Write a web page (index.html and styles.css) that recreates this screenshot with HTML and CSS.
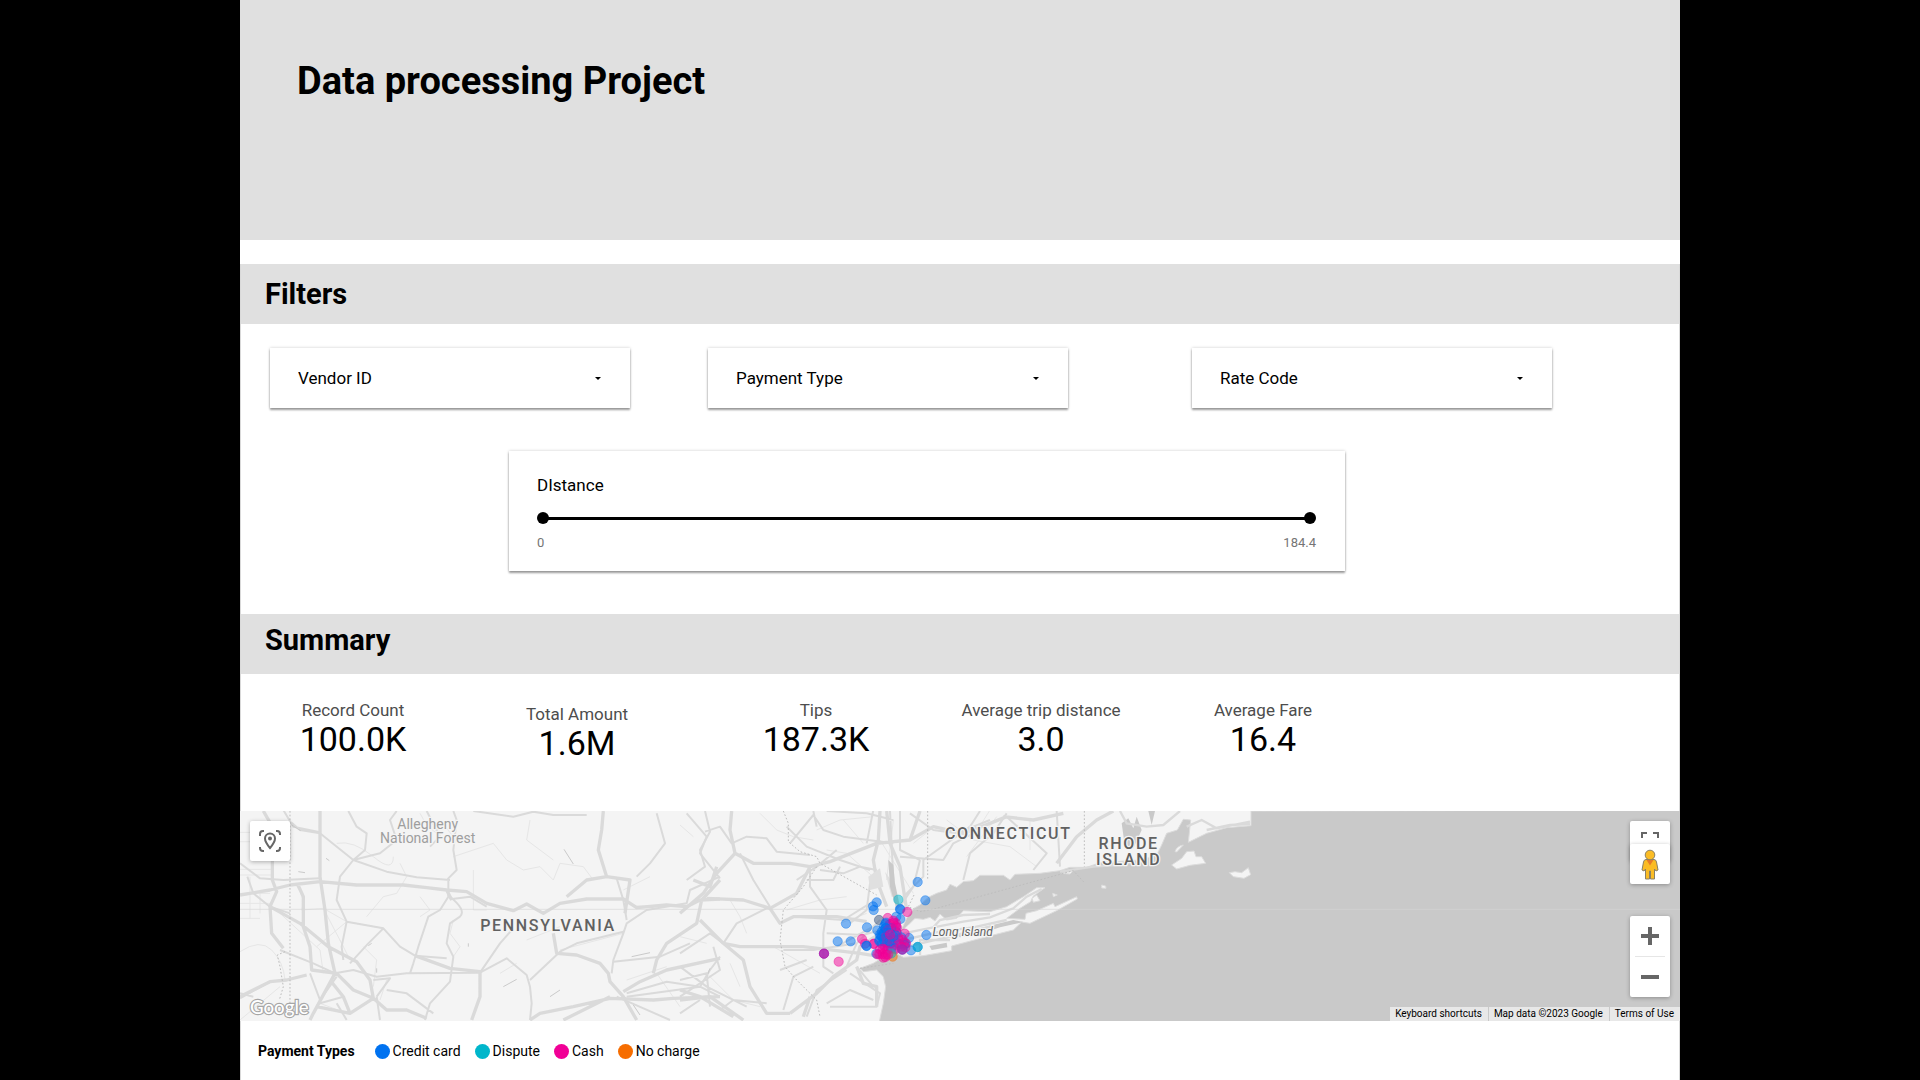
FILE: index.html
```html
<!DOCTYPE html>
<html lang="en">
<head>
<meta charset="utf-8">
<title>Data processing Project</title>
<link rel="stylesheet" href="styles.css">
</head>
<body>
<main class="report">
  <header class="banner"><h1>Data processing Project</h1></header>

  <section class="panel">
    <h2 class="bar">Filters</h2>
    <div class="filters">
      <div class="card filter">
        <select aria-label="Vendor ID"><option>Vendor ID</option></select>
        <svg class="caret" viewBox="0 0 6 3"><path d="M0 0h6L3 3z"/></svg>
      </div>
      <div class="card filter">
        <select aria-label="Payment Type"><option>Payment Type</option></select>
        <svg class="caret" viewBox="0 0 6 3"><path d="M0 0h6L3 3z"/></svg>
      </div>
      <div class="card filter">
        <select aria-label="Rate Code"><option>Rate Code</option></select>
        <svg class="caret" viewBox="0 0 6 3"><path d="M0 0h6L3 3z"/></svg>
      </div>
    </div>
    <div class="distance-row">
      <div class="card distance">
        <label for="distance-min">DIstance</label>
        <div class="range">
          <input id="distance-min" type="range" min="0" max="184.4" step="0.1" value="0">
          <input type="range" min="0" max="184.4" step="0.1" value="184.4" aria-label="Maximum distance">
        </div>
        <div class="range-values"><span>0</span><span>184.4</span></div>
      </div>
    </div>
  </section>

  <section class="panel">
    <h2 class="bar bar-top">Summary</h2>
    <dl class="scores">
      <div class="score"><dt>Record Count</dt><dd>100.0K</dd></div>
      <div class="score score-low"><dt>Total Amount</dt><dd>1.6M</dd></div>
      <div class="score"><dt>Tips</dt><dd>187.3K</dd></div>
      <div class="score"><dt>Average trip distance</dt><dd>3.0</dd></div>
      <div class="score"><dt>Average Fare</dt><dd>16.4</dd></div>
    </dl>
  </section>

  <section class="map" aria-label="Trips by payment type">
    <svg class="map-canvas" viewBox="0 0 4320 630" preserveAspectRatio="xMidYMid slice">
      <!-- western roads -->
      <g transform="translate(0 -33)">
        <g class="minor">
          <path d="M0 97H40M0 125H45M0 208H100M0 225H95M0 280H90M0 310H90M0 355H60M30 230V355M60 270V340M0 455Q60 415 95 450T135 540M185 330L250 325L320 365L430 385M250 325L310 440M165 250Q200 300 185 330M290 130Q340 120 400 170T460 170M540 40Q560 80 590 100L600 60L640 110M480 190L500 230L470 280L430 290L380 350M540 290L570 330L540 350M640 360L630 400L660 440L640 470M640 170L700 150L760 130L800 180L850 210L900 200L940 240L960 190L1030 200L1060 240M940 180L860 120L870 60M1230 230L1150 270M780 520L830 490M860 420L960 380M1150 400L960 450M120 340L240 450L250 520M330 480L300 420M320 365L230 440M370 440L410 480L400 560M0 660L120 560M240 610L320 640M440 540L420 600M1160 540L1280 500M1320 620L1250 520M700 210V330L740 330"/>
        </g>
        <g class="mid">
          <path d="M0 190L60 235L130 240L240 235M22 230L40 280L90 320L150 340M155 68L180 90L240 100L340 180L440 215L530 232L630 240M130 30L160 80L240 97M325 33L350 80L380 100L375 150L340 180L300 230L290 300L320 365L305 440L310 480M340 180L420 160L470 120L450 60L470 33M560 33L600 110L570 140M640 33L650 60L640 150L650 210L625 235V290L600 330L565 350L535 440L520 490L510 520M320 365L430 385L480 440L525 467L620 475M430 385L385 430L330 490M630 290Q680 330 660 350L630 370L620 430L640 470L630 545L570 610L555 660M630 298L690 290L740 320M285 520L340 510L410 530L500 520L720 518M400 540L450 535L410 590M720 518L800 475L860 525L870 560L875 610L870 660M870 540L960 455L1010 430L1150 395M820 385L780 430L720 518M700 33L820 50L880 35L940 45L1040 45M1250 40L1275 130L1230 190L1190 230M1340 40L1400 110L1380 160L1440 235M1130 235L1150 300L1160 360M1150 400L1160 370L1220 330L1340 310L1350 270L1440 230M1190 320L1240 320M1150 400L1120 480L1115 520M1120 485L1260 470L1350 430M1160 580L1280 545L1380 560L1440 590M1130 590L1290 660M1160 590L1380 560L1410 510L1440 470M0 580L40 590M90 545L0 595M120 450L220 490L285 520M210 520L240 600L290 530M240 610L310 590M290 610L320 660M410 590L420 660M440 570L500 580L580 640"/>
        </g>
        <g class="major">
          <path d="M240 33V230L255 330L265 430L285 520L220 640L210 660M0 285L90 270L150 255L240 245L350 255L490 255L560 263L620 270L680 275L740 310L820 332L860 312L910 340L960 310L1040 297L1150 297L1190 323L1280 315L1340 320L1380 300L1440 297M70 33L97 80V240L110 275L90 320L95 400L130 445M90 320L180 370L265 440L350 485L390 540L400 595L330 640L230 620M172 250L190 290V380L210 440L215 510L290 520L340 570L400 595L440 630L500 630L560 655M0 590L90 545L140 540L200 525M620 270L635 300M525 467L630 505L720 515L720 590L695 660M1090 33L1085 90L1075 150L1100 230L1040 240L980 290M1100 230L1170 240L1155 340M940 400L950 460L1010 465L1080 490L1105 520L1110 545L1150 590L1190 660M870 660L900 640L1000 620L1110 595L1240 600L1300 595L1440 590M970 660L1110 590M1150 575L1200 545L1280 510L1440 475M1240 520L1250 480L1280 430L1370 370L1385 300L1440 240M330 640L310 590L270 540"/>
        </g>
        <path class="ticks" d="M972 148L1000 192M175 215L195 218M385 437L395 430M685 430V440M790 560L830 538M1400 530L1410 505M930 590L960 570M155 75L182 92M258 175L268 182M410 505V518M1180 615L1200 645M1175 470L1230 458"/>
        <path class="dashed" d="M150 33V620"/>
        <path class="dashed" d="M135 455L112 465L120 500L130 560L118 600"/>
      </g>

      <!-- eastern roads -->
      <g transform="translate(1320 -33)">
        <g class="minor">
          <path d="M0 75L40 110M240 40L290 90L340 110L400 120M440 150L500 160L590 240M150 300L180 350L200 400M0 410L80 430M80 520L160 600L240 620M150 490L180 560M280 440L350 480L420 520M320 330L420 300L500 290M490 60L550 130M410 90L480 60L580 50M750 90L700 130M800 60L880 120L990 140L1070 200M930 30L880 110M860 170L950 50M1000 70L1100 160M1050 60V150M600 120L700 280M640 60L620 240M560 340L480 370"/>
        </g>
        <g class="mid">
          <path d="M75 33L90 95L60 150L75 200L20 240M75 95L120 80L155 130L200 110L260 115L290 155L390 165M180 160L220 240L270 320M270 320L170 370L130 430M390 200L390 260L440 330L430 400V500L460 520M380 240L460 240L480 200M330 130L400 45L430 90L490 110L640 130M400 33L410 80M320 80L380 140L480 180L570 210M440 33L560 40L640 60M660 33V150L720 180M560 130L580 30M690 40L760 90L830 100L930 60M660 170L790 180L820 130L880 100M850 240L870 160L940 100L980 40M980 50L1100 160L1060 210M1130 33L1140 200M900 33L870 80L730 180V230L670 290M720 180L700 260L660 320M630 33L640 240M600 240L570 250L560 330L510 370M590 210L540 200L490 220L420 210M570 310L490 360L350 350M440 400L550 405L600 390M530 430L400 450L310 450M500 500L530 430L600 360M580 380L470 440M380 650L410 570L500 510M300 510L380 480M310 630L340 530L400 500M0 500L80 560L200 620M0 590L120 510L100 440M510 520L600 580L590 620L450 620M530 500L580 560M440 610L510 570L580 600M0 460L90 400L130 430M0 540L80 520L90 620M0 640L60 600M120 630L160 600L260 610M470 150L410 200L350 240"/>
        </g>
        <g class="major">
          <path d="M155 33L150 90L165 160L110 220L70 280L0 340M165 160L220 190L330 190L390 200L450 185L590 130L690 120L760 80L850 100L930 70L980 50M390 200L350 280L270 325L300 370L340 350L470 350L560 365M130 430L180 440L370 440L540 460L600 470M130 430L60 360M130 430L190 480L210 560L260 640L330 640M600 33L595 120L580 180L590 240L620 320M620 33L630 130L660 200L680 330M720 33L690 120M0 570L60 590L160 650M0 600L90 590L190 660M330 640L410 580L460 530L530 480L540 440L600 400M80 295L190 300L270 325M1130 190L1190 110L1250 60L1300 33M970 50L1060 60L1150 40M390 590L370 650M530 500L550 550L590 560V620M40 240L90 260L110 200"/>
        </g>
        <path class="dashed" d="M310 33L325 70V125L360 155L410 170L420 190L590 285M743 33V240M410 200L370 260L310 330L300 420L315 500L350 540L410 600L420 650M1213 33V200"/>
        <path class="park" d="M565 230L600 205L610 260L570 270ZM615 215L640 250L650 290L635 290Z"/>
      </g>

      <!-- sea, with the coast from New Jersey up to Rhode Island -->
      <g transform="translate(1800 87)">
        <path class="shore" d="M1233 -87V-43L1160 -37L1100 -20L1045 7L1052 -60L1030 -62L1012 -30L980 -20L965 15L950 45L900 60L780 68L740 82L690 82L660 92L600 100L525 103L510 120L490 106L420 106L400 122L370 125L350 142L330 133L320 150L290 160L265 172L240 195L222 205L200 235L170 300L140 345L100 370L60 385L70 395L110 390L130 410L137 440L130 490L118 545H2525V-90Z"/>
        <path class="sea" d="M845 -50L865 -65L880 -35L890 -70L905 -30L880 25L855 20ZM925 -87H945L935 -45ZM145 60L160 75L165 130L180 200L170 210L150 140Z"/>
        <path class="isle" d="M205 255L225 235L250 238L270 232L285 243L300 222L320 240L350 235L370 212L450 215L500 200L550 170L590 143L615 143L580 168L572 185L540 205L500 235L555 238L558 220L590 212L640 190L645 200L710 170L712 177L650 212L570 250L545 246L520 270L460 285L335 318L335 332L250 347L190 352L160 335L165 290Z"/>
        <path class="isle" d="M576 175L590 165L600 182L580 187ZM638 160L652 165L640 170ZM785 135L797 138L798 145L785 144ZM665 100L700 92L690 102Z"/>
        <path class="isle" d="M995 75L1025 55L1040 35L1062 33L1068 50L1085 50L1097 70L1050 76L1010 87ZM1005 35Q1010 18 1030 15L1010 36ZM1168 98L1185 95L1205 98L1225 83L1232 104L1212 115L1180 110Z"/>
        <path class="sea" d="M268 318L320 308L322 322L275 330ZM350 282L430 262L520 240L550 246L480 262L440 275L360 292Z"/>
        <path class="island-road" d="M190 280L280 262L370 245L450 232L520 205L560 170L605 147M190 300L300 275L400 262L500 240M200 320L330 290L460 258M280 262L300 240L370 225L450 222M240 345V300L330 300M660 95L760 80L830 75M1040 -40L1085 -60L1130 -35L1230 -55M1100 -30L1170 -45L1230 -48M840 -87L860 -50L920 -40L970 -45L1020 -87"/>
        <path class="dashed" d="M222 165L205 200L240 215L290 205L700 92L735 130M60 385L160 370"/>
        <path class="seam" d="M-1800 208H2520"/>
      </g>

      <g class="labels">
        <text class="area" x="563" y="54">Allegheny</text>
        <text class="area" x="563" y="96">National Forest</text>
        <text class="state" x="2305" y="84">CONNECTICUT</text>
        <text class="state" x="2666" y="114">RHODE</text>
        <text class="state" x="2666" y="162">ISLAND</text>
        <text class="state" x="924" y="359">PENNSYLVANIA</text>
        <text class="island" x="2168" y="376">Long Island</text>
      </g>

      <g class="trips" transform="translate(1320 -33)">
        <g class="credit"><circle cx="713" cy="246" r="14"/><circle cx="736" cy="301" r="14"/><circle cx="590" cy="307" r="14"/><circle cx="579" cy="319" r="14"/><circle cx="581" cy="330" r="14"/><circle cx="498" cy="371" r="14"/><circle cx="561" cy="382" r="14"/><circle cx="473" cy="424" r="14"/><circle cx="512" cy="424" r="14"/><circle cx="739" cy="405" r="14"/><circle cx="660" cy="327" r="14"/><circle cx="661" cy="328" r="14"/><circle cx="649" cy="350" r="14"/><circle cx="661" cy="357" r="14"/><circle cx="592" cy="391" r="14"/><circle cx="687" cy="414" r="14"/><circle cx="693" cy="451" r="14"/><circle cx="589" cy="461" r="14"/><circle cx="713" cy="441" r="14"/></g>
        <g class="dispute"><circle cx="655" cy="299" r="14"/><circle cx="713" cy="441" r="14"/></g>
        <g class="cash"><circle cx="682" cy="336" r="14"/><circle cx="623" cy="354" r="14"/><circle cx="546" cy="417" r="14"/><circle cx="555" cy="431" r="14"/><circle cx="674" cy="401" r="14"/><circle cx="476" cy="485" r="14"/><circle cx="432" cy="461" r="14"/><circle cx="581" cy="431" r="14"/><circle cx="582" cy="432" r="14"/></g>
        <g class="credit"><circle cx="559" cy="437" r="14"/><circle cx="560" cy="438" r="14"/><circle cx="432" cy="461" r="14"/></g>
        <g class="other"><circle cx="597" cy="360" r="14"/></g>
        <g class="credit"><circle cx="618" cy="368" r="14"/><circle cx="612" cy="380" r="14"/><circle cx="606" cy="394" r="14"/><circle cx="602" cy="408" r="14"/><circle cx="598" cy="420" r="14"/><circle cx="606" cy="432" r="14"/><circle cx="624" cy="436" r="14"/><circle cx="642" cy="436" r="14"/><circle cx="660" cy="432" r="14"/><circle cx="676" cy="430" r="14"/><circle cx="664" cy="412" r="14"/><circle cx="650" cy="398" r="14"/><circle cx="648" cy="382" r="14"/></g>
        <g class="cash"><circle cx="432" cy="461" r="14"/><circle cx="640" cy="362" r="14"/><circle cx="648" cy="370" r="14"/><circle cx="630" cy="372" r="14"/><circle cx="651" cy="383" r="14"/><circle cx="648" cy="394" r="14"/><circle cx="655" cy="412" r="14"/><circle cx="668" cy="420" r="14"/><circle cx="678" cy="430" r="14"/><circle cx="640" cy="420" r="14"/><circle cx="615" cy="440" r="14"/><circle cx="600" cy="448" r="14"/><circle cx="645" cy="445" r="14"/><circle cx="592" cy="463" r="14"/></g>
        <g class="credit"><circle cx="616" cy="372" r="14"/><circle cx="616" cy="385" r="14"/><circle cx="612" cy="398" r="14"/><circle cx="606" cy="410" r="14"/><circle cx="598" cy="424" r="14"/><circle cx="612" cy="424" r="14"/><circle cx="628" cy="398" r="14"/><circle cx="626" cy="414" r="14"/><circle cx="632" cy="430" r="14"/><circle cx="646" cy="405" r="14"/><circle cx="654" cy="430" r="14"/><circle cx="674" cy="434" r="14"/><circle cx="634" cy="446" r="14"/><circle cx="667" cy="448" r="14"/><circle cx="600" cy="404" r="14"/><circle cx="634" cy="384" r="14"/></g>
        <g class="cash"><circle cx="640" cy="368" r="14"/><circle cx="648" cy="378" r="14"/><circle cx="624" cy="390" r="14"/><circle cx="618" cy="410" r="14"/><circle cx="633" cy="418" r="14"/><circle cx="656" cy="420" r="14"/><circle cx="672" cy="428" r="14"/><circle cx="608" cy="446" r="14"/><circle cx="622" cy="450" r="14"/><circle cx="598" cy="463" r="14"/><circle cx="664" cy="440" r="14"/><circle cx="676" cy="442" r="14"/><circle cx="646" cy="448" r="14"/><circle cx="620" cy="428" r="14"/></g>
        <g class="credit"><circle cx="618" cy="384" r="14"/><circle cx="622" cy="398" r="14"/><circle cx="640" cy="410" r="14"/><circle cx="667" cy="449" r="14"/><circle cx="610" cy="418" r="14"/><circle cx="628" cy="424" r="14"/></g>
        <g class="nocharge"><circle cx="638" cy="470" r="14"/></g>
        <g class="dispute"><circle cx="634" cy="460" r="14"/></g>
        <g class="cash"><circle cx="608" cy="462" r="14"/><circle cx="618" cy="464" r="14"/><circle cx="610" cy="473" r="14"/><circle cx="616" cy="471" r="14"/><circle cx="624" cy="464" r="14"/><circle cx="667" cy="449" r="14"/><circle cx="630" cy="404" r="14"/></g>
      </g>
      <text class="logo" x="30" y="608">Google</text>
    </svg>

    <button class="control locate" aria-label="Fit to data">
      <svg viewBox="0 0 22 22" width="22" height="22"><path class="line" d="M1 6V4Q1 1 4 1H5M17 1h1q3 0 3 3v1M21 17v1q0 3-3 3h-1M5 21H4q-3 0-3-3v-1"/><path class="line" d="M11 18Q6 12 6 8.500a5 5 0 0 1 10 0Q16 12 11 18Z"/><circle cx="11" cy="8.500" r="2"/></svg>
    </button>
    <div class="view-controls">
      <button class="control fullscreen" aria-label="Fullscreen">
        <svg viewBox="0 0 18 18" width="18" height="18"><path d="M0 0h6v2H2v4H0zM12 0h6v6h-2V2h-4zM0 12h2v4h4v2H0zM16 12h2v6h-6v-2h4z"/></svg>
      </button>
      <button class="control pegman" aria-label="Street View">
        <svg viewBox="0 0 18 31" width="18" height="31"><path class="peg" d="M5 10.500h8q2 0 2.500 2.500l1.500 8-2 1-1.500-2V30H9.500v-8h-1v8H4.500V20L3 22l-2-1L2.500 13Q3 10.500 5 10.500Z"/><path class="scarf" d="M5.500 11h7L9 16.500Z"/><circle class="peg" cx="9" cy="6" r="4.800"/></svg>
      </button>
    </div>
    <div class="zoom">
      <button aria-label="Zoom in"><svg viewBox="0 0 18 18" width="18" height="18"><path d="M7 0h4v7h7v4h-7v7H7v-7H0V7h7z"/></svg></button>
      <button aria-label="Zoom out"><svg viewBox="0 0 18 18" width="18" height="18"><path d="M0 7h18v4H0z"/></svg></button>
    </div>
    <div class="credits">
      <button>Keyboard shortcuts</button><span>Map data ©2023 Google</span><a href="#">Terms of Use</a>
    </div>
  </section>

  <footer class="legend">
    <strong>Payment Types</strong>
    <ul>
      <li><i class="dot credit"></i>Credit card</li>
      <li><i class="dot dispute"></i>Dispute</li>
      <li><i class="dot cash"></i>Cash</li>
      <li><i class="dot nocharge"></i>No charge</li>
    </ul>
  </footer>
</main>
</body>
</html>
```
FILE: styles.css
```css
* { box-sizing: border-box; }
body {
  margin: 0;
  background: #000;
  color: #000;
  font-family: Roboto, "Liberation Sans", sans-serif;
  font-size: 17px;
}
h1, h2, dl, dd, ul { margin: 0; padding: 0; }
button, select { font: inherit; color: inherit; border: 0; background: none; padding: 0; }

.report {
  width: 75%;
  min-height: 100vh;
  margin: 0 auto;
  background: #fff;
  display: flex;
  flex-direction: column;
}
.banner { min-height: 240px; padding: 56px 57px; background: #e0e0e0; margin-bottom: 24px; }
h1 { font-size: 38px; line-height: 50px; font-weight: 700; }

.panel { border: solid #d9d9d9; border-width: 0 1px; }
.bar {
  height: 60px;
  padding: 0 24px;
  background: #e0e0e0;
  font-size: 29px;
  line-height: 60px;
  font-weight: 700;
}
.bar-top { line-height: 52px; }

.card { background: #fff; box-shadow: 0 0 3px rgba(0, 0, 0, .2), 0 2px 2px rgba(0, 0, 0, .36); }
.filters {
  display: grid;
  grid-template-columns: 360fr 78fr 360fr 124fr 360fr;
  padding: 24px 127px 0 29px;
}
.filter { display: flex; align-items: center; height: 60px; padding: 0 29px 0 28px; }
.filter:nth-child(2) { grid-column: 3; }
.filter:nth-child(3) { grid-column: 5; }
.filter select { flex: 1; height: 60px; appearance: none; outline: 0; }
.caret { width: 6px; height: 3px; pointer-events: none; }

.distance-row { padding: 43px 334px 43px 268px; }
.distance { height: 120px; padding: 24px 29px 24px 28px; display: flex; flex-direction: column; }
.distance label { line-height: 20px; }
.range { display: grid; margin-top: 14px; background: linear-gradient(#000, #000) center / calc(100% - 8px) 3px no-repeat; }
.range input {
  grid-area: 1 / 1;
  width: 100%;
  height: 18px;
  margin: 0;
  appearance: none;
  background: none;
  pointer-events: none;
}
.range input::-webkit-slider-thumb {
  appearance: none;
  width: 12px;
  height: 12px;
  border-radius: 50%;
  background: #000;
  pointer-events: auto;
}
.range-values {
  display: flex;
  justify-content: space-between;
  margin-top: 8px;
  font-size: 13px;
  line-height: 16px;
  color: #757575;
}

.scores {
  display: grid;
  grid-template-columns: 224fr 224fr 254fr 196fr 248fr 292fr;
  height: 137px;
  padding-top: 26px;
  text-align: center;
}
.score dt { font-size: 17px; line-height: 20px; color: #4d4d4d; }
.score dd { font-size: 34px; line-height: 38px; }
.score-low { padding-top: 4px; }

.map { position: relative; height: 210px; overflow: hidden; }
.map-canvas { display: block; width: 100%; height: 100%; background: #f4f4f4; }
.minor, .mid, .major { fill: none; stroke: #dadada; stroke-linejoin: round; }
.minor { stroke: #e6e6e6; stroke-width: 3; }
.mid { stroke-width: 6; }
.major { stroke-width: 10; }
.ticks { fill: none; stroke: #cacaca; stroke-width: 3; }
.dashed { fill: none; stroke: #bdbdbd; stroke-width: 3; stroke-dasharray: 5 6; }
.park { fill: #e0e0e0; }
.sea { fill: #c9c9c9; }
.shore { fill: #c9c9c9; stroke: #dcdcdc; stroke-width: 3; }
.isle { fill: #f4f4f4; stroke: #dcdcdc; stroke-width: 3; }
.island-road { fill: none; stroke: #dadada; stroke-width: 7; }
.seam { stroke: #d6d6d6; stroke-width: 3; opacity: .6; }
.labels text { text-anchor: middle; paint-order: stroke; stroke: #f4f4f4; stroke-width: 8; stroke-linejoin: round; }
.labels .state { font-size: 48px; font-weight: 500; letter-spacing: 5px; fill: #616161; }
.labels .area { font-size: 42px; fill: #9e9e9e; }
.labels .island { font-size: 36px; font-style: italic; fill: #616161; }
.logo { font: 500 56px Lato, sans-serif; fill: #fff; stroke: #a6a6a6; stroke-width: 7; paint-order: stroke; }
.trips circle { fill: currentColor; stroke: currentColor; fill-opacity: .5; stroke-opacity: .6; stroke-width: 2; }
.credit { color: #0072f0; }
.dispute { color: #00b6cb; }
.cash { color: #f10096; }
.nocharge { color: #f66d00; }
.other { color: #334f7a; }

.control, .zoom {
  position: absolute;
  border-radius: 2px;
  background: #fff;
  box-shadow: 0 1px 4px rgba(0, 0, 0, .3);
  fill: #666;
}
.control { width: 40px; height: 40px; display: grid; place-items: center; }
.locate { left: 10px; top: 10px; }
.line { fill: none; stroke: #666; stroke-width: 2; }
.view-controls { position: absolute; right: 10px; top: 10px; width: 40px; height: 63px; }
.fullscreen { top: 0; left: 0; }
.pegman { bottom: 0; left: 0; }
.peg { fill: #fbbc24; stroke: #8a8066; stroke-width: 1; }
.scarf { fill: #e67a2a; }
.zoom { right: 10px; bottom: 24px; width: 40px; }
.zoom button { display: grid; place-items: center; width: 100%; height: 40px; }
.zoom button + button { height: 41px; background: linear-gradient(#e6e6e6, #e6e6e6) top / 30px 1px no-repeat; }
.credits {
  position: absolute;
  right: 0;
  bottom: 0;
  display: flex;
  gap: 1px;
  font-size: 10px;
  line-height: 14px;
}
.credits > * { padding: 0 6px 0 5px; background: #e8e8e8; color: #000; text-decoration: none; white-space: nowrap; }

.legend {
  flex: 1;
  display: flex;
  align-items: flex-start;
  gap: 20px;
  padding: 20px 17px;
  border: solid #d9d9d9;
  border-width: 0 1px;
  font-size: 14px;
  line-height: 20px;
}
.legend ul { display: flex; gap: 14px; list-style: none; }
.legend li { display: flex; align-items: center; gap: 3px; }
.dot { width: 15px; height: 15px; border-radius: 50%; background: currentColor; }
```
